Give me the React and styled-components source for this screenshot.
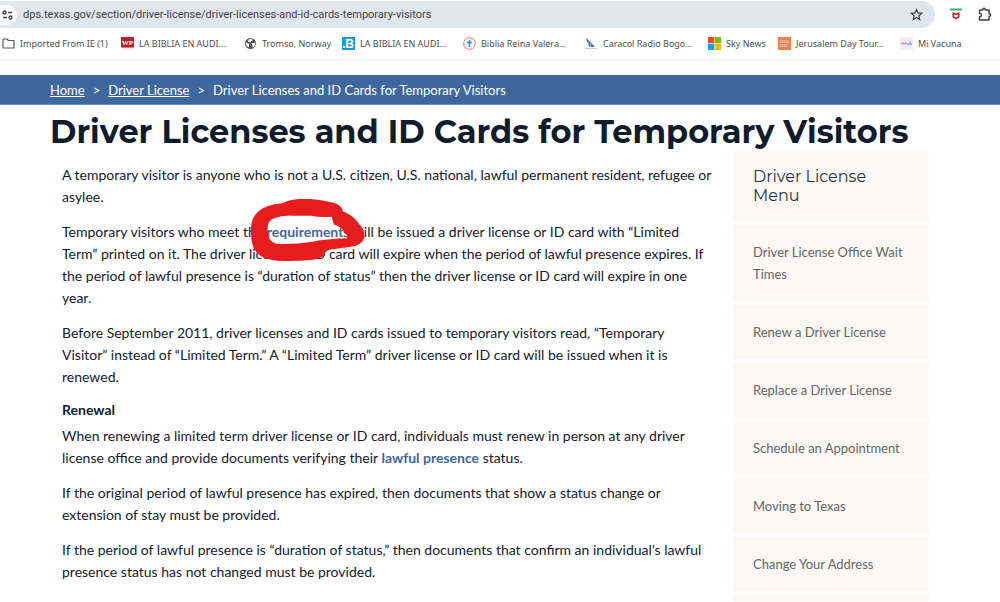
import styled, { createGlobalStyle } from "styled-components";

const GlobalStyle = createGlobalStyle`
  * {
    box-sizing: border-box;
  }
  body {
    margin: 0;
    background-color: #fff;
    color: #14202f;
    font-family: Lato, sans-serif;
    font-size: 14px;
    line-height: 22px;
  }
`
const Window = styled.div`
  height: 100vh;
  display: flex;
  flex-direction: column;
  overflow: hidden;
`
const Toolbar = styled.div`
  display: flex;
  flex: none;
  align-items: center;
  gap: 14px;
  padding: 1px 7px 0 0;
  height: 28px;
`
const AddressBar = styled.form`
  flex: 1;
  display: flex;
  align-items: center;
  height: 27px;
  padding-right: 12px;
  border-radius: 0 14px 14px 0;
  background-color: #e1e6ed;
`
const SiteInfo = styled.button`
  display: flex;
  align-items: center;
  justify-content: center;
  width: 17px;
  height: 20px;
  padding: 0 3px 0 0;
  border: none;
  border-radius: 0 10px 10px 0;
  background-color: #fff;
`
const AddressInput = styled.input`
  flex: 1;
  margin-left: 6px;
  padding: 0;
  border: none;
  outline: none;
  background: none;
  color: #3f4247;
  font-family: Roboto, sans-serif;
  font-size: 11px;
`
const IconButton = styled.button`
  display: flex;
  padding: 0;
  border: none;
  background: none;
`
const Bookmarks = styled.nav`
  display: flex;
  flex: none;
  align-items: center;
  height: 33px;
  padding-left: 2px;
  border-bottom: 2px solid #f2f3f4;
`
const Bookmark = styled.a`
  display: flex;
  flex: none;
  align-items: center;
  gap: 5px;
  width: ${props=>props.w}px;
  color: #4b4e52;
  font-family: "Noto Sans", sans-serif;
  font-size: 9px;
  line-height: 14px;
  text-decoration: none;
  white-space: nowrap;
  svg {
    flex: none;
  }
`
const Breadcrumb = styled.nav`
  display: flex;
  flex: none;
  align-items: center;
  gap: 8px;
  height: 30px;
  margin-top: 14px;
  padding: 0 50px;
  border-bottom: 1px solid #6c8cba;
  background-color: #3e679e;
  color: #fff;
  font-size: 13px;
  white-space: nowrap;
  a {
    color: #fff;
  }
`
const Page = styled.main`
  padding: 0 71px 0 50px;
`
const Title = styled.h1`
  margin: 0;
  padding-top: 8px;
  color: #111c2b;
  font-family: Montserrat, Inter, sans-serif;
  font-size: 32px;
  font-weight: 700;
  line-height: 38px;
  white-space: nowrap;
`
const Columns = styled.div`
  display: flex;
  align-items: flex-start;
  gap: 12px;
`
const Article = styled.article`
  flex: 1;
  padding: 13px 8px 0 12px;
  p {
    margin: 0 0 13px;
  }
  h2 {
    margin: -2px 0 4px;
    font-size: 14px;
    line-height: 22px;
  }
`
const TextLink = styled.a`
  color: #3e679e;
  font-weight: bold;
  text-decoration: none;
`
const Marked = styled.span`
  position: relative;
`
const Scribble = styled.svg`
  position: absolute;
  left: -16px;
  top: -24px;
  pointer-events: none;
`
const Sidebar = styled.aside`
  flex: none;
  width: 196px;
  display: flex;
  flex-direction: column;
  gap: 4px;
`
const MenuTitle = styled.h2`
  margin: 0;
  padding: 16px 20px;
  background-color: #fbf8f6;
  color: #26313f;
  font-family: Montserrat, Inter, sans-serif;
  font-size: 16px;
  font-weight: 400;
  line-height: 19px;
`
const MenuItem = styled.a`
  padding: 16px 20px;
  background-color: #fbf8f6;
  color: #646768;
  font-size: 13px;
  line-height: 22px;
  text-decoration: none;
`

const Favicon = ({ children }) => (
  <svg width="13" height="13" viewBox="0 0 13 13" aria-hidden="true">{children}</svg>
)

const bookmarks = [
  {
    name: 'Imported From IE (1)', w: 119,
    icon: <path d="M1 2h4l1.4 1.5H12V11H1z" fill="none" stroke="#555a5f" strokeWidth="1.2" strokeLinejoin="round"/>
  },
  {
    name: 'LA BIBLIA EN AUDI...', w: 123,
    icon: <>
      <path d="M0 0h13v13H0z" fill="#eee"/>
      <path d="M0 0h13v10.500H0z" fill="#b4232a"/>
      <text x="6.5" y="8" textAnchor="middle" fontFamily="Liberation Serif" fontWeight="bold" fontSize="7" fill="#fff">WP</text>
    </>
  },
  {
    name: 'Tromso, Norway', w: 98,
    icon: <>
      <circle cx="6.500" cy="6.500" r="5.500" fill="#54585d"/>
      <path d="M1.800 5.500c1.500.2 2.700.8 3.200 1.500.4.700-.2 1.500 0 3.300C3 9.800 1.500 8 1.800 5.500zM5.500 2l2.500.2c.8.8.3 1.600-.6 1.800-.6.100-.5 1-1.200 1.200L4.200 4.700C4 3.500 4.700 2.500 5.500 2zM7.500 6.500l3.700-.8c.3 2.300-.7 4-2.400 4.900l-.3-2.100z" fill="#fff"/>
    </>
  },
  {
    name: 'LA BIBLIA EN AUDI...', w: 121,
    icon: <>
      <path d="M0 0h13v13H0z" fill="#129bdb"/>
      <text x="7.5" y="11" textAnchor="middle" fontFamily="Liberation Sans" fontWeight="bold" fontSize="12" fill="#fff">B</text>
      <path d="M1 9h2v2H1z" fill="#fff"/>
    </>
  },
  {
    name: 'Biblia Reina Valera...', w: 122,
    icon: <>
      <circle cx="6.500" cy="6.500" r="5.800" fill="#fff" stroke="#f0705a"/>
      <path d="M6.500 3v7M4 5.500h5" stroke="#2693d1" strokeWidth="1.600"/>
    </>
  },
  {
    name: 'Caracol Radio Bogo...', w: 123,
    icon: <>
      <path d="M1 1c3 2 6 6 9 9H4.500C3 7 1.500 4 1 1z" fill="#4d70a8"/>
      <path d="M4 4l-1 5M6 5l-.5 5" stroke="#bed0e8" strokeWidth=".6"/>
      <path d="M0 11.500h12" stroke="#c9cbd0"/>
    </>
  },
  {
    name: 'Sky News', w: 70,
    icon: <>
      <path d="M0 0h6.200v6.200H0z" fill="#f25022"/>
      <path d="M6.800 0H13v6.200H6.800z" fill="#7fba00"/>
      <path d="M0 6.800h6.200V13H0z" fill="#00a4ef"/>
      <path d="M6.800 6.800H13V13H6.800z" fill="#ffb900"/>
    </>
  },
  {
    name: 'Jerusalem Day Tour...', w: 122,
    icon: <>
      <path d="M0 0h13v13H0z" fill="#f58148"/>
      <path d="M2 4h9M2 5.500h9M2 8h7M2 9.500h7" stroke="#fbd0b8" strokeWidth="1" strokeDasharray="1.500 .5"/>
    </>
  },
  {
    name: 'Mi Vacuna', w: 80,
    icon: <>
      <path d="M0 0h13v13H0z" fill="#efeff1"/>
      <path d="M1 6.500h6" stroke="#e86aa3" strokeWidth="1.400" strokeDasharray="1.500 .4"/>
      <path d="M7 7h5M9.500 5h1.500" stroke="#8663cf" strokeWidth="1.200"/>
    </>
  },
]

const menu = [
  'Driver License Office Wait Times',
  'Renew a Driver License',
  'Replace a Driver License',
  'Schedule an Appointment',
  'Moving to Texas',
  'Change Your Address',
]

const Browser = () => (
  <>
    <Toolbar>
      <AddressBar>
        <SiteInfo type="button" aria-label="Site information">
          <svg width="11" height="10" viewBox="0 0 11 10" fill="none" stroke="#3c4043" strokeWidth="1.300">
            <circle cx="2.500" cy="2.500" r="1.500"/>
            <path d="M6 2.500h4M1 7.500h4"/>
            <circle cx="8.500" cy="7.500" r="1.500"/>
          </svg>
        </SiteInfo>
        <AddressInput aria-label="Address" defaultValue="dps.texas.gov/section/driver-license/driver-licenses-and-id-cards-temporary-visitors"/>
        <IconButton type="button" aria-label="Bookmark this page">
          <svg width="13" height="13" viewBox="0 0 13 13" fill="none" stroke="#3c4043" strokeWidth="1.200">
            <path d="M6.500 1.500l1.500 3.400 3.700.4-2.800 2.400.8 3.700-3.200-2-3.200 2 .8-3.700-2.800-2.400 3.700-.4z"/>
          </svg>
        </IconButton>
      </AddressBar>
      <IconButton type="button" aria-label="WebAdvisor">
        <svg width="14" height="13" viewBox="0 0 14 13">
          <path d="M1 1.500h12" stroke="#3ba98a" strokeWidth="2"/>
          <path d="M3.500 4l3.500 1.500L10.500 4v5.500L7 11.500 3.500 9.500z" fill="#c9202f"/>
          <path d="M5.200 6.500L7 7.300l1.800-.8v2.200L7 9.500l-1.800-.8z" fill="#fff"/>
        </svg>
      </IconButton>
      <IconButton type="button" aria-label="Extensions">
        <svg width="16" height="15" viewBox="0 0 16 15" fill="none" stroke="#3c4043" strokeWidth="1.400" strokeLinejoin="round">
          <path d="M2.500 3h3.300V2.500a1.200 1.200 0 0 1 2.400 0V3h3.800v3.800h.5a1.200 1.200 0 0 1 0 2.400H12V13H2.500V9.800c2.500 0 2.500-3.600 0-3.600z"/>
        </svg>
      </IconButton>
    </Toolbar>
    <Bookmarks aria-label="Bookmarks">
      {bookmarks.map((b, i) => (
        <Bookmark key={i} href="#" w={b.w}>
          <Favicon>{b.icon}</Favicon>
          {b.name}
        </Bookmark>
      ))}
    </Bookmarks>
  </>
)

const App = () => {
  return (
    <Window>
      <GlobalStyle/>
      <Browser/>
      <Breadcrumb aria-label="Breadcrumb">
        <a href="#">Home</a>
        <span>&gt;</span>
        <a href="#">Driver License</a>
        <span>&gt;</span>
        <span>Driver Licenses and ID Cards for Temporary Visitors</span>
      </Breadcrumb>
      <Page>
        <Title>Driver Licenses and ID Cards for Temporary Visitors</Title>
        <Columns>
          <Article>
            <p>A temporary visitor is anyone who is not a U.S. citizen, U.S. national, lawful permanent resident, refugee or asylee.</p>
            <p>
              Temporary visitors who meet the{' '}
              <Marked>
                <TextLink href="#">requirements</TextLink>
                <Scribble width="114" height="63" viewBox="35 28 342 189" aria-hidden="true">
                  <path
                    fill="#e71d1d"
                    fillRule="evenodd"
                    d="M35 125Q33 95 48 75Q65 52 105 44Q130 42 145 34Q175 25 215 28Q250 31 285 40Q308 47 310 65Q340 76 355 98Q378 120 375 145Q368 168 330 172L270 180Q258 184 254 196Q246 208 215 211Q155 216 115 213Q60 208 46 180Q34 158 35 125ZM85 120Q83 94 104 86Q130 76 160 78L215 78Q240 84 278 81Q280 98 285 105Q312 114 314 128Q330 137 321 146Q260 148 220 156Q160 165 110 162Q84 155 85 120Z"
                  />
                </Scribble>
              </Marked>
              {' '}will be issued a driver license or ID card with “Limited Term” printed on it. The driver license or ID card will expire when the period of lawful presence expires. If the period of lawful presence is “duration of status” then the driver license or ID card will expire in one year.
            </p>
            <p>
              Before September 2011, driver licenses and ID cards issued to temporary visitors read, “Temporary<br/>
              Visitor” instead of “Limited Term.” A “Limited Term” driver license or ID card will be issued when it is renewed.
            </p>
            <h2>Renewal</h2>
            <p>When renewing a limited term driver license or ID card, individuals must renew in person at any driver license office and provide documents verifying their <TextLink href="#">lawful presence</TextLink> status.</p>
            <p>If the original period of lawful presence has expired, then documents that show a status change or extension of stay must be provided.</p>
            <p>If the period of lawful presence is “duration of status,” then documents that confirm an individual’s lawful presence status has not changed must be provided.</p>
          </Article>
          <Sidebar>
            <MenuTitle>Driver License Menu</MenuTitle>
            {menu.map((m) => <MenuItem key={m} href="#">{m}</MenuItem>)}
            <MenuItem as="div"/>
          </Sidebar>
        </Columns>
      </Page>
    </Window>
  )
};

export default App;
